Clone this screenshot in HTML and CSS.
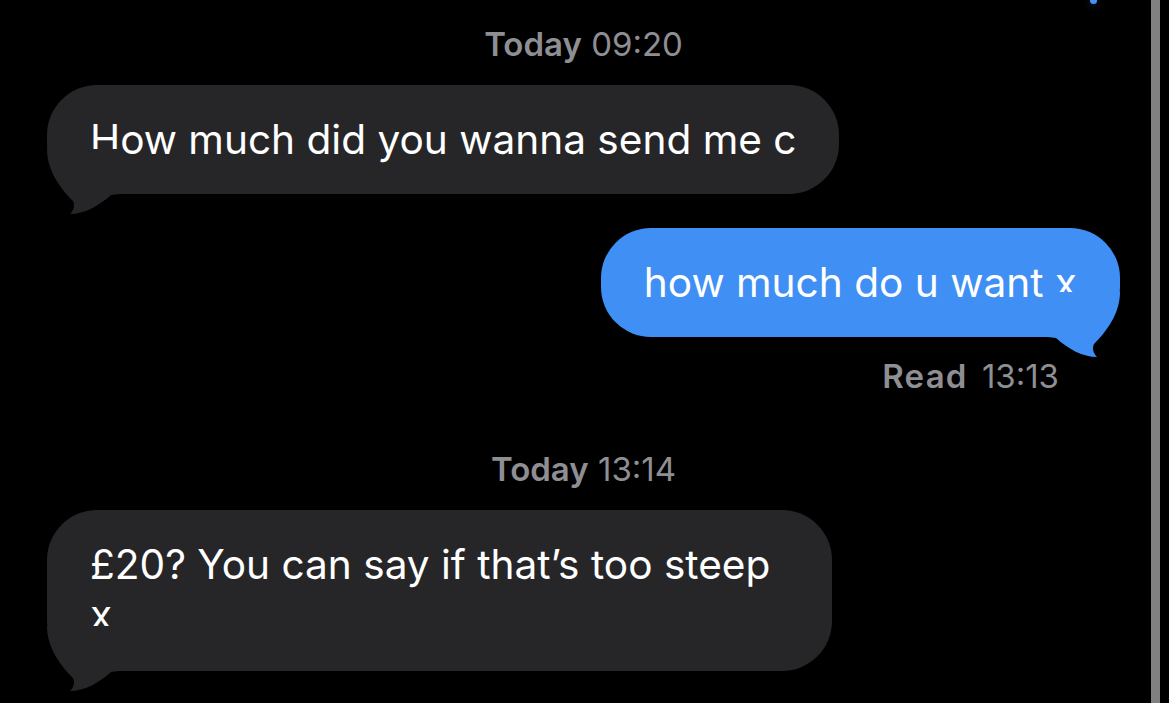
FILE: index.html
```html
<!DOCTYPE html>
<html>
<head>
<meta charset="utf-8">
<link rel="stylesheet" href="styles.css">
</head>
<body>
<div class="screen">
  <div class="chat">
    <span class="prev-tail"></span>
    <div class="stamp"><b>Today</b> 09:20</div>
    <div class="row in">
      <div class="bubble gray">How much did you wanna send me c
        <svg class="tail left" width="72" height="66" viewBox="0 0 72 66"><path d="M0 0 C0 22 14 40 26 52 C28 56 27 61 23 65 C37 65 52 57 64 46 L72 45 L72 0 Z"/></svg>
      </div>
    </div>
    <div class="row out">
      <div class="bubble blue">how much do u want x
        <svg class="tail right" width="72" height="66" viewBox="0 0 72 66"><path d="M0 0 C0 22 14 40 26 52 C28 56 27 61 23 65 C37 65 52 57 64 46 L72 45 L72 0 Z"/></svg>
      </div>
    </div>
    <div class="receipt"><b>Read</b> 13:13</div>
    <div class="stamp second"><b>Today</b> 13:14</div>
    <div class="row in">
      <div class="bubble gray wide">£20? You can say if that’s too steep x
        <svg class="tail left" width="72" height="66" viewBox="0 0 72 66"><path d="M0 0 C0 22 14 40 26 52 C28 56 27 61 23 65 C37 65 52 57 64 46 L72 45 L72 0 Z"/></svg>
      </div>
    </div>
  </div>
  <div class="scrollbar"></div>
  <div class="edge"></div>
</div>
</body>
</html>
```
FILE: styles.css
```css
html, body {
  margin: 0;
  padding: 0;
  background: #000;
}
body {
  font-family: "Inter", "Noto Sans", "Liberation Sans", sans-serif;
  color: #fff;
  overflow: hidden;
}
.screen {
  display: flex;
  width: 1169px;
  height: 703px;
  overflow: hidden;
}
.chat {
  position: relative;
  width: 1151px;
  min-width: 1151px;
  display: flex;
  flex-direction: column;
}
.prev-tail {
  position: absolute;
  left: 1090px;
  top: -3px;
  width: 7px;
  height: 7px;
  border-radius: 50%;
  background: #4a90f0;
  box-shadow: 0 2px 8px rgba(60, 120, 230, 0.35);
}
.stamp, .receipt {
  font-size: 33px;
  line-height: 36px;
  color: #8e8e93;
}
.stamp b, .receipt b {
  font-weight: 600;
}
.stamp {
  text-align: center;
  padding-left: 16px;
  margin-top: 26px;
  margin-bottom: 23px;
}
.stamp.second {
  margin-top: 57px;
  margin-bottom: 23px;
}
.receipt {
  text-align: right;
  margin-top: 21px;
  margin-right: 92px;
  word-spacing: 5px;
}
.receipt b {
  letter-spacing: 1.2px;
}
.row {
  display: flex;
}
.row.in {
  justify-content: flex-start;
  padding-left: 47px;
}
.row.out {
  justify-content: flex-end;
  padding-right: 31px;
  margin-top: 34px;
}
.bubble {
  position: relative;
  font-size: 40.6px;
  line-height: 50px;
  padding: 30px 43px 29px;
  border-radius: 50px;
  max-width: 740px;
}
.bubble.wide {
  padding: 30px 54px 31px 43px;
  max-width: 688px;
}
.gray {
  background: #262629;
}
.blue {
  background: #3f8ff5;
}
.tail {
  position: absolute;
  bottom: -21px;
}
.gray .tail path { fill: #262629; }
.blue .tail path { fill: #3f8ff5; }
.tail.left {
  left: 0;
}
.tail.right {
  right: 0;
  transform: scaleX(-1);
}
.scrollbar {
  width: 9px;
  min-width: 9px;
  background: #808080;
}
.edge {
  width: 9px;
  min-width: 9px;
  background: #000;
}
```
